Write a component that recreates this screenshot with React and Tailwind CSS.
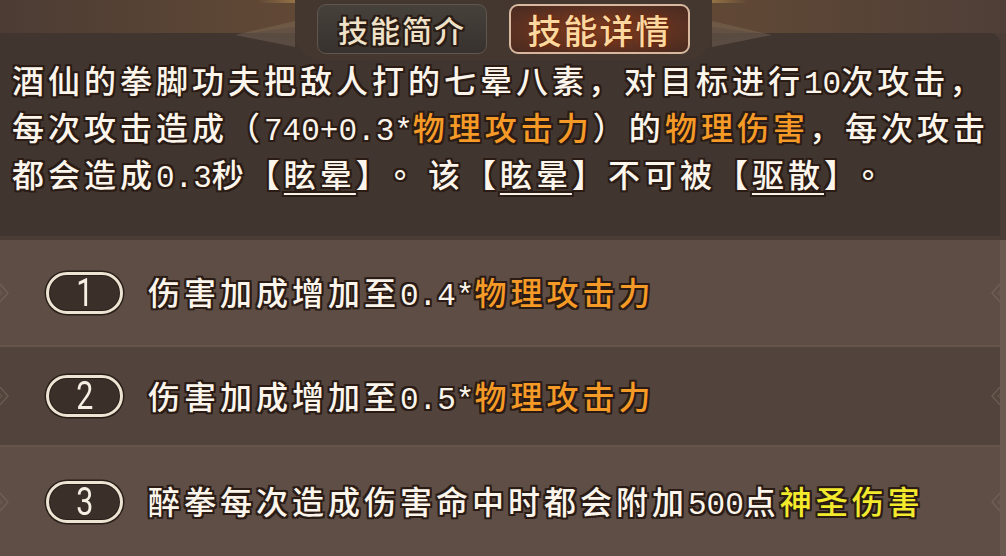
import React from 'react';

// dark outline around game text
const stroke =
    '[text-shadow:2px_0_0_#2a1c15,-2px_0_0_#2a1c15,0_2px_0_#2a1c15,0_-2px_0_#2a1c15,2px_2px_0_#2a1c15,-2px_-2px_0_#2a1c15,2px_-2px_0_#2a1c15,-2px_2px_0_#2a1c15]';

const cjk = "font-['Noto_Sans_CJK_SC',sans-serif]";
const mono = "font-['Liberation_Mono','Noto_Sans_CJK_SC',monospace]";

// one run of text: plain, number, centred full stop, orange, yellow or underlined keyword
const Run = ({ t, k }) => {
    if (k === 'n') {
        return <span className={`${mono} text-[31px] leading-none tracking-normal text-[#fbf5ec]`}>{t}</span>;
    }
    if (k === 'p') {
        return <span className="font-['Noto_Sans_CJK_TC',sans-serif] px-[8px] text-[#fbf5ec]">{t}</span>;
    }
    const color =
        k === 'o' ? 'text-[#f59a26]' : k === 'y' ? 'text-[#f3ea2c]' : 'text-[#fbf5ec]';
    const under = k === 'u' ? 'underline decoration-2 underline-offset-[6px] decoration-[#f7f1e8]' : '';
    return <span className={`${color} ${under}`}>{t}</span>;
};

const Line = ({ runs }) => (
    <div className="h-[47px] whitespace-nowrap tracking-[4px]">
        {runs.map((r, i) => (
            <Run key={i} t={r[0]} k={r[1]} />
        ))}
    </div>
);

const description = [
    [['酒仙的拳脚功夫把敌人打的七晕八素，对目标进行'], ['10', 'n'], ['次攻击，']],
    [['每次攻击造成（'], ['740+0.3*', 'n'], ['物理攻击力', 'o'], ['）的'], ['物理伤害', 'o'], ['，每次攻击']],
    [
        ['都会造成'], ['0.3', 'n'], ['秒【'], ['眩晕', 'u'], ['】'], ['。', 'p'], ['该【'], ['眩晕', 'u'],
        ['】不可被【'], ['驱散', 'u'], ['】'], ['。', 'p'],
    ],
];

const upgrades = [
    { n: 1, h: 'h-[105px]', bg: 'bg-[#5d4d45]', runs: [['伤害加成增加至'], ['0.4*', 'n'], ['物理攻击力', 'o']] },
    { n: 2, h: 'h-[100px]', bg: 'bg-[#52433c]', runs: [['伤害加成增加至'], ['0.5*', 'n'], ['物理攻击力', 'o']] },
    { n: 3, h: 'h-[111px]', bg: 'bg-[#5e4e46]', runs: [['醉拳每次造成伤害命中时都会附加'], ['500', 'n'], ['点'], ['神圣伤害', 'y']] },
];

const EdgeMark = ({ flip }) => (
    <svg width="10" height="22" viewBox="0 0 10 22" className={flip ? 'rotate-180' : ''}>
        <path d="M0 2 L8 11 L0 20" fill="none" stroke="#7a695e" strokeWidth="1.5" opacity="0.6" />
        <path d="M-4 5 L2 11 L-4 17" fill="none" stroke="#7a695e" strokeWidth="1.5" opacity="0.4" />
    </svg>
);

const Wing = ({ flip }) => (
    <svg width="60" height="34" viewBox="0 0 60 34" className={flip ? '-scale-x-100' : ''}>
        <path d="M0 22 L60 8 L60 34 Z" fill="#8a7868" opacity="0.35" />
        <path d="M8 21 L60 14 L60 28 Z" fill="#5a4a40" opacity="0.5" />
    </svg>
);

const Badge = ({ n }) => (
    <div className="w-[77px] h-[42px] shrink-0 rounded-full border-[3px] border-[#ede4d4] bg-[#3a2f29] shadow-[0_0_0_1.5px_#2a1f19,inset_0_0_0_1px_#2a1f19] flex items-center justify-center">
        <span className="font-['Roboto',sans-serif] font-normal text-[38px] leading-none scale-x-[0.8] text-[#f6efe4]">{n}</span>
    </div>
);

const App = () => {
    return (
        <div className={`relative w-[1006px] h-[556px] overflow-hidden bg-[#4b3d36] font-medium ${cjk}`}>
            {/* top strip */}
            <div className="h-[33px] bg-[linear-gradient(90deg,#4c3c34_0%,#5e4735_25%,#6b4f35_50%,#5e4735_75%,#4f3f38_100%)]">
                <div className="mx-auto w-[490px] h-[3px] bg-[linear-gradient(90deg,transparent,#c99c58_15%,#d8ad68_50%,#c99c58_85%,transparent)]" />
            </div>

            {/* description */}
            <div className={`h-[203px] w-[1000px] rounded-tr-[10px] bg-[#41352f] pt-[23px] pl-[12px] text-[32px] leading-[47px] ${stroke}`}>
                {description.map((runs, i) => (
                    <Line key={i} runs={runs} />
                ))}
            </div>

            {/* upgrade rows */}
            <div className="mt-[4px] w-[1006px] bg-[#6a5a50] pr-[6px]">
                {upgrades.map((u, i) => (
                    <div
                        key={u.n}
                        className={`${u.h} ${u.bg} ${i > 0 ? 'border-t-2 border-[#65554c]' : ''} flex items-center`}
                    >
                        <div className="w-[46px] shrink-0">
                            <EdgeMark />
                        </div>
                        <Badge n={u.n} />
                        <div className={`ml-[25px] pb-[2px] text-[32px] leading-[47px] ${stroke}`}>
                            <Line runs={u.runs} />
                        </div>
                        <div className="ml-auto">
                            <EdgeMark flip />
                        </div>
                    </div>
                ))}
            </div>

            {/* tab switcher sits over the strip and the panel edge */}
            <div className="absolute left-[235px] top-0 flex items-center">
                <Wing />
                <div className="h-[60px] px-[22px] rounded-b-[26px] bg-[#43372f] flex items-center gap-[22px] pb-[2px]">
                    <div className="w-[170px] h-[50px] rounded-[9px] border border-[#5f564f] bg-[linear-gradient(180deg,#47413c,#37322e)] flex items-center justify-center">
                        <span className={`text-[30px] tracking-[2px] text-[#efe2c8] ${stroke}`}>技能简介</span>
                    </div>
                    <div className="w-[181px] h-[50px] rounded-[9px] border-2 border-[#d9b8a0] bg-[radial-gradient(ellipse_at_center,#7c4126_0%,#5e3222_60%,#482a20_100%)] flex items-center justify-center">
                        <span className="text-[34px] tracking-[2px] text-[#fcd89e] [text-shadow:0_0_3px_#5a1e0c,0_0_6px_#8a3512]">技能详情</span>
                    </div>
                </div>
                <Wing flip />
            </div>
        </div>
    );
};

export default App;
